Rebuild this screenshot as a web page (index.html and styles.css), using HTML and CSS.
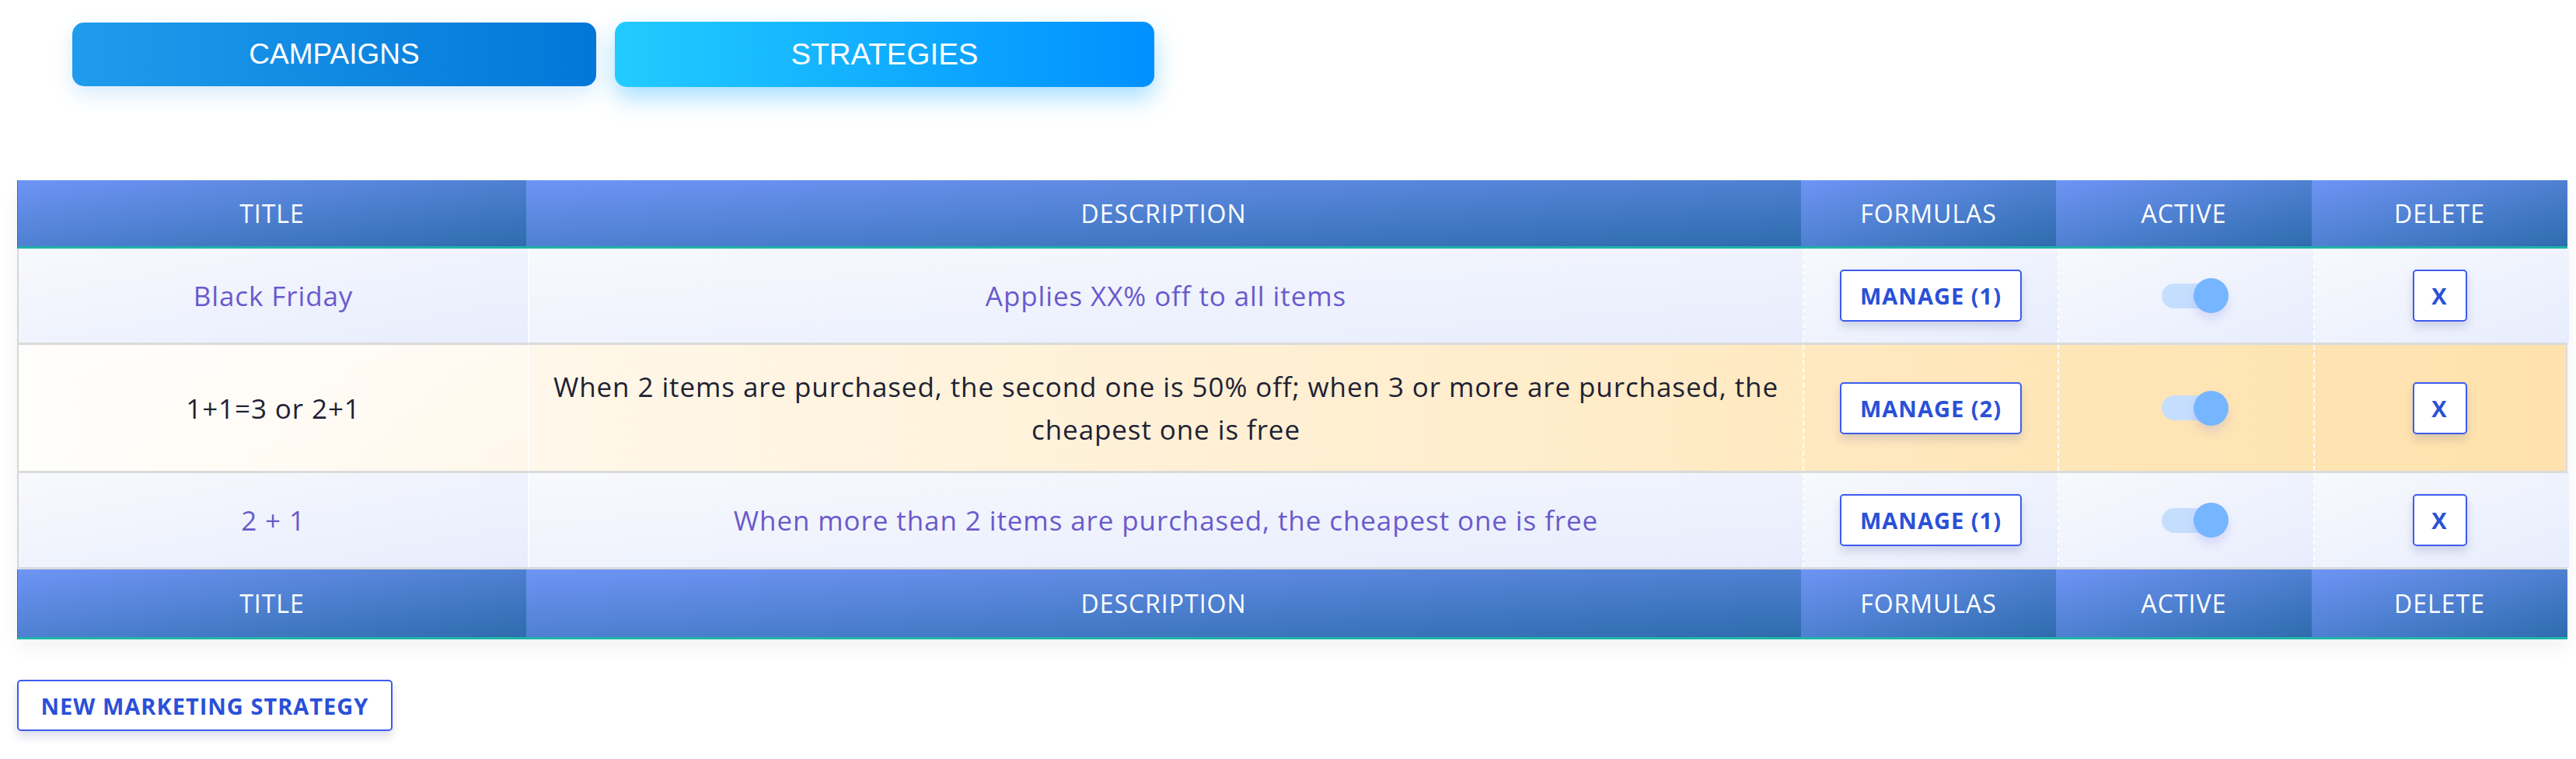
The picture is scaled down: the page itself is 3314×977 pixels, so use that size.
FILE: index.html
```html
<!DOCTYPE html>
<html lang="en">
<head>
<meta charset="utf-8">
<title>Marketing strategies</title>
<link rel="stylesheet" href="styles.css">
</head>
<body>
<div class="page">
  <nav class="tabs">
    <button class="tab tab-campaigns">CAMPAIGNS</button>
    <button class="tab tab-strategies">STRATEGIES</button>
  </nav>

  <div class="table">
    <div class="row head">
      <div class="hcell">TITLE</div>
      <div class="hcell">DESCRIPTION</div>
      <div class="hcell">FORMULAS</div>
      <div class="hcell">ACTIVE</div>
      <div class="hcell">DELETE</div>
    </div>

    <div class="row body-row">
      <div class="cell c-title">Black Friday</div>
      <div class="cell c-desc">Applies XX% off to all items</div>
      <div class="cell c-dash"><button class="btn">MANAGE (1)</button></div>
      <div class="cell c-dash c-active"><span class="toggle"><span class="track"></span><span class="knob"></span></span></div>
      <div class="cell c-dash"><button class="btn btn-x">X</button></div>
    </div>

    <div class="row body-row row-hl">
      <div class="cell c-title">1+1=3 or 2+1</div>
      <div class="cell c-desc">When 2 items are purchased, the second one is 50% off; when 3 or more are purchased, the cheapest one is free</div>
      <div class="cell c-dash"><button class="btn">MANAGE (2)</button></div>
      <div class="cell c-dash c-active"><span class="toggle"><span class="track"></span><span class="knob"></span></span></div>
      <div class="cell c-dash"><button class="btn btn-x">X</button></div>
    </div>

    <div class="row body-row">
      <div class="cell c-title">2 + 1</div>
      <div class="cell c-desc">When more than 2 items are purchased, the cheapest one is free</div>
      <div class="cell c-dash"><button class="btn">MANAGE (1)</button></div>
      <div class="cell c-dash c-active"><span class="toggle"><span class="track"></span><span class="knob"></span></span></div>
      <div class="cell c-dash"><button class="btn btn-x">X</button></div>
    </div>

    <div class="row head foot">
      <div class="hcell">TITLE</div>
      <div class="hcell">DESCRIPTION</div>
      <div class="hcell">FORMULAS</div>
      <div class="hcell">ACTIVE</div>
      <div class="hcell">DELETE</div>
    </div>
  </div>

  <button class="btn btn-new">NEW MARKETING STRATEGY</button>
</div>
</body>
</html>
```

FILE: styles.css
```css
* { box-sizing: border-box; }

html, body {
  margin: 0;
  padding: 0;
  background: #ffffff;
}

body {
  font-family: "Open Sans", "Noto Sans", sans-serif;
}

.page {
  padding: 28px 11px 40px 22px;
  display: flex;
  flex-direction: column;
  align-items: flex-start;
}

.tabs {
  display: flex;
  align-items: center;
  gap: 24px;
  margin-left: 71px;
}

.tab {
  border: none;
  color: #ffffff;
  font-family: "Liberation Sans", Arial, sans-serif;
  font-size: 37px;
  font-weight: 400;
  border-radius: 15px;
  cursor: pointer;
  padding: 0;
}

.tab-campaigns {
  width: 674px;
  height: 82px;
  background: linear-gradient(to right, #1f9cec, #0277d8);
  box-shadow: 0 10px 26px rgba(30, 150, 240, 0.18);
}

.tab-strategies {
  width: 694px;
  height: 84px;
  font-size: 38.5px;
  background: linear-gradient(to right, #22cbff, #0090ff);
  box-shadow: 0 14px 30px rgba(20, 170, 255, 0.38);
}

.table {
  margin-top: 120px;
  width: 3281px;
  display: flex;
  flex-direction: column;
  box-shadow: 0 12px 24px rgba(0, 0, 0, 0.05);
}

.row {
  display: grid;
  grid-template-columns: 655px 1640px 328px 329px 329px;
}

.head .hcell {
  height: 88px;
  display: flex;
  align-items: center;
  justify-content: center;
  color: #ffffff;
  font-size: 32px;
  letter-spacing: 1px;
  background: linear-gradient(to bottom right, #6f94f5, #2e6cad);
  border-bottom: 3px solid #1fb3a9;
}

.head .hcell:first-child {
  border-left: 1px solid #3a68b0;
}

.foot .hcell {
  height: 90px;
}

.body-row {
  border-left: 2px solid #d6d6d6;
  border-right: 2px solid #dcdcdc;
  border-bottom: 3px solid #dadada;
}

.cell {
  display: flex;
  align-items: center;
  justify-content: center;
  text-align: center;
  padding: 26px 14px;
  min-height: 121px;
  font-size: 35px;
  letter-spacing: 0.9px;
  line-height: 55px;
  color: #6a5acd;
  background: linear-gradient(to bottom right, #f8f9fd, #e7edfd);
}

.c-desc {
  border-left: 2px solid rgba(255, 255, 255, 0.85);
}

.c-dash {
  border-left: 2px dashed rgba(255, 255, 255, 0.95);
}

.row-hl {
  background: linear-gradient(to right, #fffdfa 0%, #fff6e6 25%, #ffeecf 55%, #ffe6b8 80%, #ffe2ad 100%);
}

.row-hl .cell {
  color: #1e2233;
  background: transparent;
}

.row-hl .c-title {
  background: linear-gradient(to bottom right, rgba(255,255,255,0.6), rgba(255,255,255,0));
}

.btn {
  background: #ffffff;
  border: 2px solid #3d5bf0;
  border-radius: 5px;
  color: #2a50d8;
  font-family: "Open Sans", "Noto Sans", sans-serif;
  font-size: 29px;
  font-weight: 700;
  letter-spacing: 1px;
  height: 67px;
  padding: 0 24px;
  box-shadow: 0 7px 12px rgba(60, 70, 130, 0.18);
  cursor: pointer;
}

.btn-x {
  width: 70px;
  padding: 0;
  margin-right: 6px;
}

.c-active {
  padding-left: 36px;
}

.toggle {
  display: flex;
  align-items: center;
}

.track {
  width: 64px;
  height: 32px;
  border-radius: 16px 0 0 16px;
  background: #c5defe;
}

.knob {
  width: 45px;
  height: 45px;
  border-radius: 50%;
  margin-left: -23px;
  background: #76b5ff;
  box-shadow: 0 8px 12px rgba(110, 110, 230, 0.18);
}

.btn-new {
  margin-top: 52px;
  width: 483px;
  height: 66px;
  font-size: 29px;
  padding: 0;
}
```
